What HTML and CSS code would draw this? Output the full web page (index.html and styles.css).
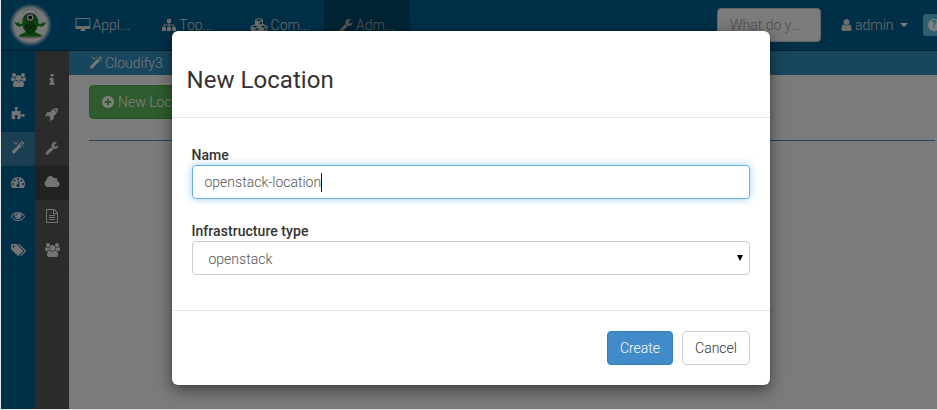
FILE: index.html
```
<!DOCTYPE html>
<html lang="en">
<head>
<meta charset="utf-8">
<title>New Location</title>
<link rel="stylesheet" href="styles.css">
</head>
<body>
<svg class="defs" width="0" height="0">
  <symbol id="desktop" viewBox="0 0 1984 1792"><path d="M1856 992v-832q0-13-9.5-22.5t-22.5-9.5h-1600q-13 0-22.5 9.5t-9.5 22.5v832q0 13 9.5 22.5t22.5 9.5h1600q13 0 22.5-9.5t9.5-22.5zm128-832v1088q0 66-47 113t-113 47h-544q0 37 16 77.5t32 71 16 43.5q0 26-19 45t-45 19h-512q-26 0-45-19t-19-45q0-14 16-44t32-70 16-78h-544q-66 0-113-47t-47-113v-1088q0-66 47-113t113-47h1600q66 0 113 47t47 113z"/></symbol>
  <symbol id="sitemap" viewBox="0 0 1792 1792"><path d="M1792 1248v320q0 40-28 68t-68 28h-320q-40 0-68-28t-28-68v-320q0-40 28-68t68-28h96v-192h-512v192h96q40 0 68 28t28 68v320q0 40-28 68t-68 28h-320q-40 0-68-28t-28-68v-320q0-40 28-68t68-28h96v-192h-512v192h96q40 0 68 28t28 68v320q0 40-28 68t-68 28h-320q-40 0-68-28t-28-68v-320q0-40 28-68t68-28h96v-192q0-52 38-90t90-38h512v-192h-96q-40 0-68-28t-28-68v-320q0-40 28-68t68-28h320q40 0 68 28t28 68v320q0 40-28 68t-68 28h-96v192h512q52 0 90 38t38 90v192h96q40 0 68 28t28 68z"/></symbol>
  <symbol id="cubes" viewBox="0 0 18 14"><path fill-rule="evenodd" d="M9 0l4 1.7v4.4l4.4 1.9v4.3L13.200 14 9 12.300 4.800 14 .6 12.300V8L5 6.100V1.700zM9 1.100L6.200 2.300 9 3.500l2.800-1.200zM9.600 4.500v2.300L12 5.800V3.500zM4.700 7.400L2 8.500l2.800 1.200 2.700-1.200zM5.400 10.700v2.100L8.300 11.600V9.500zM13.200 7.400l-2.700 1.100 2.700 1.200L16 8.500zM13.800 10.700v2.100l2.600-1.200V9.500z"/></symbol>
  <symbol id="wrench" viewBox="0 0 1792 1792"><path d="M448 1472q0-26-19-45t-45-19-45 19-19 45 19 45 45 19 45-19 19-45zm644-420l-682 682q-37 37-90 37-52 0-91-37l-106-108q-38-36-38-90 0-53 38-91l681-681q39 98 114.500 173.500t173.500 114.500zm634-435q0 39-23 106-47 134-164.500 217.500t-258.500 83.500q-185 0-316.500-131.500t-131.500-316.500 131.500-316.500 316.500-131.500q58 0 121.500 16.500t107.500 46.500q16 11 16 28t-16 28l-293 169v224l193 107q5-3 79-48.500t135.500-81 70.500-35.500q15 0 23.500 10t8.500 25z"/></symbol>
  <symbol id="user" viewBox="192 0 1408 1792"><path d="M1536 1399q0 109-62.500 187t-150.500 78h-854q-88 0-150.500-78t-62.500-187q0-85 8.500-160.500t31.500-152 58.500-131 94-89 134.500-34.500q131 128 313 128t313-128q76 0 134.500 34.500t94 89 58.500 131 31.500 152 8.500 160.500zm-256-887q0 159-112.500 271.500t-271.500 112.500-271.500-112.500-112.500-271.500 112.500-271.500 271.500-112.500 271.500 112.500 112.500 271.500z"/></symbol>
  <symbol id="users" viewBox="0 0 1920 1792"><path d="M593 896q-162 5-265 128h-134q-82 0-138-40.500t-56-118.500q0-353 124-353 6 0 43.500 21t97.500 42.500 119 21.500q67 0 133-23-5 37-5 66 0 139 81 256zm1071 637q0 120-73 189.500t-194 69.500h-874q-121 0-194-69.500t-73-189.500q0-53 3.500-103.500t14-109 26.500-108.500 43-97.500 62-81 85.500-53.500 111.500-20q10 0 43 21.500t73 48 107 48 135 21.500 135-21.500 107-48 73-48 43-21.500q61 0 111.500 20t85.500 53.500 62 81 43 97.500 26.500 108.500 14 109 3.500 103.500zm-1024-1277q0 106-75 181t-181 75-181-75-75-181 75-181 181-75 181 75 75 181zm704 384q0 159-112.500 271.500t-271.500 112.500-271.500-112.500-112.500-271.500 112.500-271.500 271.500-112.500 271.500 112.500 112.500 271.500zm576 225q0 78-56 118.500t-138 40.500h-134q-103-123-265-128 81-117 81-256 0-29-5-66 66 23 133 23 59 0 119-21.500t97.500-42.500 43.500-21q124 0 124 353zm-128-609q0 106-75 181t-181 75-181-75-75-181 75-181 181-75 181 75 75 181z"/></symbol>
  <symbol id="puzzle" viewBox="0 0 1792 1792"><path d="M1755 1083q0 81-44.500 135t-123.500 54q-41 0-77.500-17.500t-59-38-56.500-38-71-17.500q-110 0-110 124 0 39 16 115t15 115v5q-22 0-33 1-34 3-97.500 11.500t-115.500 13.500-98 5q-61 0-103-26.500t-42-83.500q0-37 17.500-71t38-56.500 38-59 17.500-77.500q0-79-54-123.500t-135-44.500q-84 0-143 45.500t-59 127.500q0 43 15 83t33.500 64.500 33.500 53 15 50.500q0 45-46 89-37 35-117 35-95 0-245-24-9-2-27.500-4t-27.500-4l-13-2q-1 0-3-1-2 0-2-1v-1024q2 1 17.500 3.500t34 5 21.500 3.500q150 24 245 24 80 0 117-35 46-44 46-89 0-22-15-50.500t-33.500-53-33.500-64.500-15-83q0-82 59-127.500t144-45.500q80 0 134 44.500t54 123.500q0 41-17.500 77.500t-38 59-38 56.500-17.500 71q0 57 42 83.500t103 26.500q64 0 180-15t163-17v2q-1 2-3.500 17.500t-5 34-3.500 21.500q-24 150-24 245 0 80 35 117 44 46 89 46 22 0 50.500-15t53-33.500 64.500-33.500 83-15q82 0 127.500 59t45.500 143z"/></symbol>
  <symbol id="magic" viewBox="0 0 1792 1792"><path d="M1254 581l293-293-107-107-293 293zm447-293q0 27-18 45l-1286 1286q-18 18-45 18t-45-18l-198-198q-18-18-18-45t18-45l1286-1286q18-18 45-18t45 18l198 198q18 18 18 45zm-1351-190l98 30-98 30-30 98-30-98-98-30 98-30 30-98zm350 162l196 60-196 60-60 196-60-196-196-60 196-60 60-196zm930 478l98 30-98 30-30 98-30-98-98-30 98-30 30-98zm-640-640l98 30-98 30-30 98-30-98-98-30 98-30 30-98z"/></symbol>
  <symbol id="gauge" viewBox="0 0 1792 1792"><path d="M384 1152q0-53-37.500-90.500t-90.500-37.500-90.500 37.500-37.500 90.500 37.500 90.500 90.500 37.500 90.500-37.500 37.500-90.500zm192-448q0-53-37.500-90.500t-90.500-37.500-90.500 37.500-37.500 90.500 37.500 90.500 90.500 37.500 90.500-37.500 37.500-90.500zm428 481l101-382q6-26-7.500-48.500t-38.500-29.500-48 6.500-30 39.500l-101 382q-60 5-107 43.500t-63 98.500q-20 77 20 146t117 89 146-20 89-117q16-60-6-117t-72-91zm660-33q0-53-37.500-90.500t-90.500-37.500-90.500 37.500-37.500 90.500 37.500 90.500 90.500 37.500 90.500-37.500 37.500-90.500zm-640-640q0-53-37.500-90.500t-90.500-37.500-90.500 37.500-37.500 90.500 37.500 90.500 90.500 37.500 90.500-37.500 37.500-90.500zm448 192q0-53-37.500-90.500t-90.500-37.500-90.500 37.500-37.500 90.500 37.500 90.500 90.500 37.500 90.500-37.500 37.500-90.500zm320 448q0 261-141 483-19 29-54 29h-1402q-35 0-54-29-141-221-141-483 0-182 71-348t191-286 286-191 348-71 348 71 286 191 191 286 71 348z"/></symbol>
  <symbol id="eye" viewBox="0 0 1792 1792"><path d="M1664 960q-152-236-381-353 61 104 61 225 0 185-131.500 316.500t-316.500 131.500-316.500-131.500-131.500-316.500q0-121 61-225-229 117-381 353 133 205 333.500 326.500t434.500 121.500 434.500-121.500 333.500-326.500zm-720-384q0-20-14-34t-34-14q-125 0-214.500 89.500t-89.500 214.500q0 20 14 34t34 14 34-14 14-34q0-86 61-147t147-61q20 0 34-14t14-34zm848 384q0 34-20 69-140 230-376.500 368.500t-499.500 138.500-499.500-139-376.500-368q-20-35-20-69t20-69q140-229 376.500-368t499.500-139 499.500 139 376.500 368q20 35 20 69z"/></symbol>
  <symbol id="tags" viewBox="0 0 1920 1792"><path d="M448 448q0-53-37.500-90.500t-90.500-37.500-90.500 37.500-37.500 90.500 37.500 90.500 90.500 37.500 90.500-37.500 37.500-90.500zm1067 576q0 53-37 90l-491 492q-39 37-91 37-53 0-90-37l-715-716q-38-37-64.500-101t-26.500-117v-416q0-52 38-90t90-38h416q53 0 117 26.500t102 64.500l715 714q37 39 37 91zm384 0q0 53-37 90l-491 492q-39 37-91 37-36 0-59-14t-53-45l470-470q37-37 37-90 0-52-37-91l-715-714q-38-38-102-64.500t-117-26.500h224q53 0 117 26.500t102 64.500l715 714q37 39 37 91z"/></symbol>
  <symbol id="info" viewBox="0 0 1792 1792"><path d="M1216 1344v128q0 26-19 45t-45 19h-512q-26 0-45-19t-19-45v-128q0-26 19-45t45-19h64v-384h-64q-26 0-45-19t-19-45v-128q0-26 19-45t45-19h384q26 0 45 19t19 45v576h64q26 0 45 19t19 45zm-128-1152v192q0 26-19 45t-45 19h-256q-26 0-45-19t-19-45v-192q0-26 19-45t45-19h256q26 0 45 19t19 45z"/></symbol>
  <symbol id="rocket" viewBox="0 0 1792 1792"><path d="M1440 448q0-40-28-68t-68-28-68 28-28 68 28 68 68 28 68-28 28-68zm224-288q0 249-75.500 430.500t-253.500 360.500q-81 80-195 176l-20 379q-2 16-16 26l-384 224q-7 4-16 4-12 0-23-9l-64-64q-13-14-8-32l85-276-281-281-276 85q-3 1-9 1-14 0-23-9l-64-64q-17-19-5-39l224-384q10-14 26-16l379-20q96-114 176-195 188-187 358-258t431-71q14 0 24 9.500t10 22.500z"/></symbol>
  <symbol id="cloud" viewBox="0 0 2048 1792"><path d="M1984 1152q0 159-112.500 271.500t-271.500 112.500h-1088q-185 0-316.500-131.500t-131.500-316.500q0-132 71-241.500t187-163.500q-2-28-2-43 0-212 150-362t362-150q158 0 286.500 88t187.500 230q70-62 166-62 106 0 181 75t75 181q0 75-41 138 129 30 213 134.500t84 239.500z"/></symbol>
  <symbol id="file" viewBox="0 0 1792 1792"><path d="M1468 380q28 28 48 76t20 88v1152q0 40-28 68t-68 28h-1344q-40 0-68-28t-28-68v-1600q0-40 28-68t68-28h896q40 0 88 20t76 48zm-444-244v376h376q-10-29-22-41l-313-313q-12-12-41-22zm384 1528v-1024h-416q-40 0-68-28t-28-68v-416h-768v1536h1280zM384 768h768v128h-768zM384 1024h768v128h-768zM384 1280h768v128h-768z" transform="translate(128 0)"/></symbol>
  <symbol id="plus" viewBox="0 0 1792 1792"><path d="M1344 960v-128q0-26-19-45t-45-19h-256v-256q0-26-19-45t-45-19h-128q-26 0-45 19t-19 45v256h-256q-26 0-45 19t-19 45v128q0 26 19 45t45 19h256v256q0 26 19 45t45 19h128q26 0 45-19t19-45v-256h256q26 0 45-19t19-45zm320-64q0 209-103 385.500t-279.500 279.500-385.500 103-385.500-103-279.500-279.500-103-385.500 103-385.500 279.500-279.500 385.500-103 385.500 103 279.500 279.500 103 385.500z"/></symbol>
</svg>

<div class="app">
  <header class="navbar">
    <svg class="logo" viewBox="0 0 44 44">
      <defs>
        <radialGradient id="glow"><stop offset=".76" stop-color="#eee"/><stop offset="1" stop-color="#eee" stop-opacity="0"/></radialGradient>
      </defs>
      <circle cx="22.500" cy="22" r="21.500" fill="url(#glow)"/>
      <ellipse cx="22" cy="34" rx="11" ry="1.500" fill="#aaa"/>
      <path d="M15.500 10.500q0-4.500 6.500-4.500t6.500 4.500" fill="#f5f5f5" stroke="#999" stroke-width=".8"/>
      <path d="M6 19l3.500 1 1.500-1 .5 2.200 2.800-.7Q14 10 22.200 10t8.200 10.500l2.800.7.500-2.200 1.500 1 3.500-1-2.500 3.200-2.500 1.600-3.700-1q-.7 3.700-3.500 6.200l3.500 1.500 3.500 1.500.3 1.500H11l.5-1.500 3-1.500 3.500-1.500q-2.800-2.500-3.500-6.200l-3.700 1-2.500-1.600z" fill="#168a1c"/>
      <ellipse cx="22.200" cy="25" rx="5.500" ry="6.500" fill="#0b6a12"/>
      <circle cx="22.200" cy="14.500" r="4" fill="#eee" stroke="#222"/>
      <circle cx="22.200" cy="14.500" r="1.900" fill="#111"/>
      <path d="M17.700 22.500q4.500 2.500 9 0" fill="none" stroke="#111" stroke-width="1.600"/>
      <path d="M20 23.300h1.200M23.500 23.300h1.200" stroke="#eee"/>
    </svg>
    <nav class="menu">
      <a class="item"><svg class="icon desk"><use href="#desktop"/></svg>Appl...</a>
      <a class="item"><svg class="icon"><use href="#sitemap"/></svg>Top...</a>
      <a class="item"><svg class="icon cubes"><use href="#cubes"/></svg>Com...</a>
      <a class="item active"><svg class="icon"><use href="#wrench"/></svg>Adm...</a>
    </nav>
    <div class="search">What do y...</div>
    <a class="account"><svg class="icon person"><use href="#user"/></svg>admin<i class="caret"></i></a>
    <span class="help"><b>?</b></span>
  </header>
  <div class="body">
    <aside class="side blue">
      <a><svg class="icon wide"><use href="#users"/></svg></a>
      <a><svg class="icon"><use href="#puzzle"/></svg></a>
      <a class="active"><svg class="icon"><use href="#magic"/></svg></a>
      <a><svg class="icon"><use href="#gauge"/></svg></a>
      <a><svg class="icon"><use href="#eye"/></svg></a>
      <a><svg class="icon wide"><use href="#tags"/></svg></a>
    </aside>
    <aside class="side dark">
      <a><svg class="icon"><use href="#info"/></svg></a>
      <a><svg class="icon"><use href="#rocket"/></svg></a>
      <a><svg class="icon"><use href="#wrench"/></svg></a>
      <a class="active"><svg class="icon cloud"><use href="#cloud"/></svg></a>
      <a><svg class="icon"><use href="#file"/></svg></a>
      <a><svg class="icon wide"><use href="#users"/></svg></a>
    </aside>
    <main class="main">
      <div class="crumbs"><svg class="icon"><use href="#magic"/></svg>Cloudify3</div>
      <div class="content">
        <button class="btn success"><svg class="icon"><use href="#plus"/></svg>New Location</button>
        <hr class="rule">
      </div>
    </main>
  </div>
</div>

<div class="backdrop">
  <section class="dialog">
    <div class="dialog-head"><h3>New Location</h3></div>
    <div class="dialog-body">
      <label>Name</label>
      <div class="field focus">openstack-location<i class="cursor"></i></div>
      <label>Infrastructure type</label>
      <div class="field select">openstack<i class="arrow"></i></div>
    </div>
    <div class="dialog-foot">
      <button class="btn primary">Create</button>
      <button class="btn plain">Cancel</button>
    </div>
  </section>
</div>
</body>
</html>
```
FILE: styles.css
```
* { box-sizing: border-box; }
html, body { margin: 0; height: 410px; overflow: hidden; }
body {
  background: #e6e6e6;
  font: 300 14px/20px Roboto, sans-serif;
  padding: 0 0 1px 1px;
}
.defs { position: absolute; }
.icon { width: 14px; height: 14px; fill: currentColor; flex: none; overflow: visible; }
.icon.wide { width: 15px; }
.icon.cloud { width: 16px; }

.app { height: 409px; background: #f7f7f7; display: flex; flex-direction: column; overflow: hidden; }
.navbar {
  height: 51px; flex: none; display: flex; align-items: flex-start;
  background: #005e90; border-bottom: 1px solid #003a5c; color: #fff;
}
.logo { width: 44px; height: 44px; margin: 3px 0 0 7px; flex: none; }
.menu { display: flex; height: 50px; margin-left: 8px; width: 350px; flex: none; }
.item { display: flex; align-items: center; width: 87.300px; padding-left: 15px; white-space: nowrap; color: #ddd; }
.item .icon { margin-right: 3px; }
.item .icon.desk { width: 15.500px; margin-right: 2px; }
.item .icon.cubes { width: 18px; }
.item.active { width: 86px; background: #004769; color: #aaa; margin-left: 2px; }
.search {
  width: 104px; height: 34px; margin: 8px 0 0 307px; padding: 6px 12px; flex: none;
  background: #f7f7f7; border: 1px solid #ccc; border-radius: 4px; color: #999; white-space: nowrap;
}
.account { display: flex; align-items: center; height: 50px; margin-left: 20px; width: 82px; color: #ddd; flex: none; }
.person { width: 11px; margin-right: 3px; }
.caret { border: 4px solid transparent; border-top-color: #fff; border-bottom: 0; margin-left: 6px; }
.help {
  width: 28px; height: 22px; margin-top: 14px; flex: none; border-radius: 3px;
  background: #5bc0de; display: flex; align-items: center; padding-left: 5px;
}
.help b {
  width: 12px; height: 12px; border-radius: 50%; background: #fff; color: #5bc0de; flex: none;
  font: 900 10px/12px Roboto, sans-serif; text-align: center;
}

.body { flex: 1; display: flex; }
.side { width: 34px; flex: none; padding-top: 13px; color: #e8e8e8; }
.side a { height: 34px; display: flex; align-items: center; justify-content: center; padding-bottom: 1px; border-bottom: 1px solid rgba(0,0,0,.07); }
.blue { background: #005e90; }
.dark { background: #565656; }
.blue .active { background: #367ea4; }
.dark .active { background: #444; }
.main { flex: 1; }
.crumbs { height: 24px; padding-left: 20px; display: flex; align-items: center; gap: 2px; background: #308cbc; color: #eee; }
.content { padding: 10px 2px 0 20px; }
.btn {
  display: inline-flex; align-items: center; height: 34px; padding: 0 11.500px;
  border: 1px solid; border-radius: 4px; font: inherit; white-space: nowrap;
}
.success { background: #5cb85c; border-color: #4cae4c; color: #fff; gap: 3px; padding-left: 11px; }
.rule { margin: 21px 0 0; border: 0; border-top: 1px solid #428bca; }

.backdrop { position: absolute; left: 1px; top: 0; width: 936px; height: 409px; background: rgba(0,0,0,.5); padding: 31px 0 0 171px; overflow: hidden; }
.dialog { width: 598px; height: 354px; background: #fff; border-radius: 6px; box-shadow: 0 5px 15px rgba(0,0,0,.5), 0 0 1px rgba(0,0,0,.5); color: #333; }
.dialog-head { height: 87px; padding: 33px 15px 0 14.500px; border-bottom: 1px solid #e5e5e5; }
h3 { margin: 0; font-size: 24px; line-height: 32px; font-weight: 400; letter-spacing: .05px; }
.dialog-body { height: 192px; padding: 27px 20px 0; }
label { display: block; font-weight: 500; height: 20px; letter-spacing: .05px; margin-left: -.5px; }
.field { display: flex; align-items: center; height: 34px; padding: 0 11.500px; border: 1px solid #ccc; border-radius: 4px; color: #555; }
.field + label { margin-top: 22px; }
.focus { border-color: #66afe9; box-shadow: 0 0 8px rgba(102,175,233,.6); }
.cursor { width: 1px; height: 19px; background: #111; }
.select { padding: 2px 6px 0 15.500px; justify-content: space-between; }
.arrow { border: 3px solid transparent; border-top: 6px solid #000; border-bottom: 0; margin-top: -2px; }
.dialog-foot { height: 75px; border-top: 1px solid #e5e5e5; padding: 20px 20px 0; display: flex; justify-content: flex-end; gap: 9px; }
.dialog-foot .btn { padding: 0; justify-content: center; }
.primary { width: 66px; background: #428bca; border-color: #357ebd; color: #fff; }
.plain { width: 68px; background: #fff; border-color: #ccc; color: #333; }
```
